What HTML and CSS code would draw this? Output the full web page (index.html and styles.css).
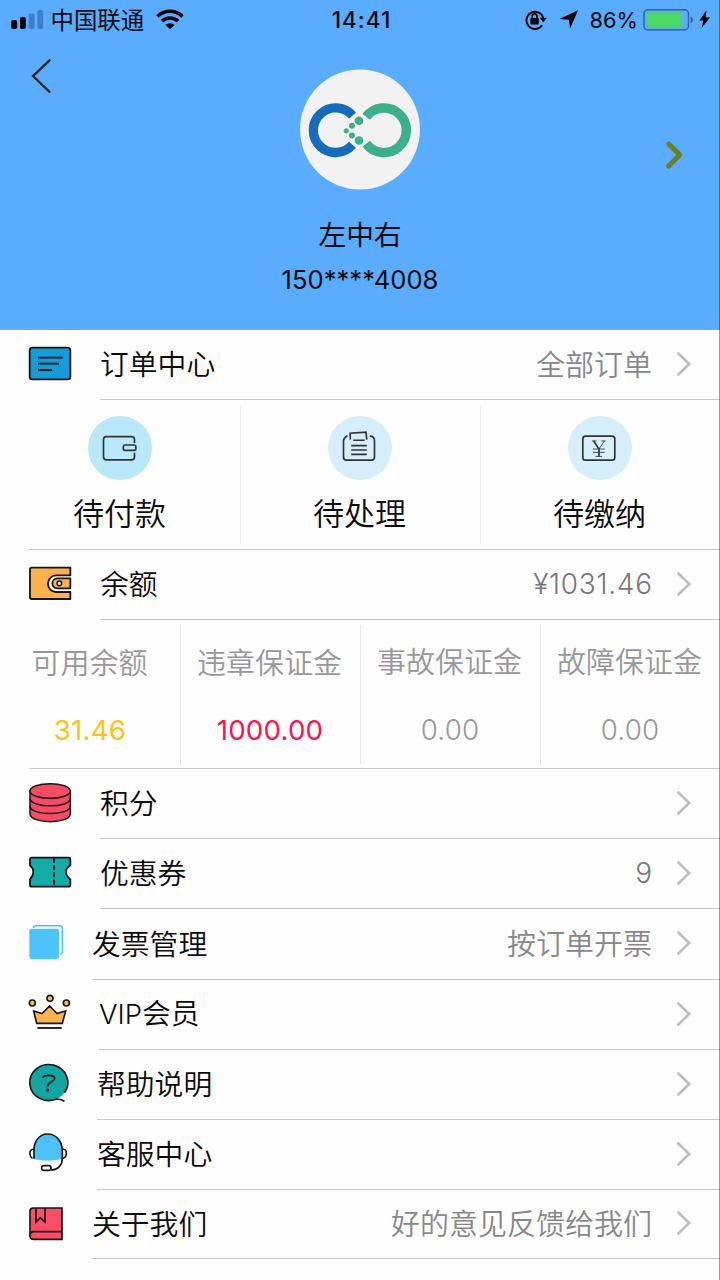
FILE: index.html
```html
<!DOCTYPE html>
<html lang="zh-CN">
<head>
<meta charset="utf-8">
<title>个人中心</title>
<link rel="stylesheet" href="styles.css">
</head>
<body>
<svg class="defs" width="0" height="0"><defs>
  <symbol id="chevron" viewBox="0 0 16 26"><path d="M1.6 1.8 13.2 13 1.6 24.2" fill="none" stroke="#bdbdc2" stroke-width="2.6"/></symbol>
</defs></svg>
<main class="screen">
  <header class="hero">
    <div class="status">
      <div class="status-left">
        <svg width="34" height="40" viewBox="0 0 34 40"><rect x="0.3" y="20" width="5.8" height="9" rx="1.8"/><rect x="9" y="17" width="5.8" height="12" rx="1.8"/><g fill="#3f7fc6"><rect x="17.8" y="13.6" width="5.8" height="15.4" rx="1.8"/><rect x="26.4" y="10" width="5.8" height="19" rx="1.8"/></g></svg>
        <span class="carrier">中国联通</span>
        <svg class="wifi" width="28" height="40" viewBox="0 0 28 40"><g fill="none" stroke="#000" stroke-width="3.5"><path d="M1.5 16.4a18 18 0 0 1 25 0"/><path d="M6 21.1a11.7 11.7 0 0 1 16 0"/></g><path d="M9.3 25a7 7 0 0 1 9.4 0L14 29z"/></svg>
      </div>
      <div class="clock">14:41</div>
      <div class="status-right">
        <svg width="22" height="40" viewBox="0 0 22 40"><path d="M17.1 25.3A8.6 8.6 0 1 1 18.3 18" fill="none" stroke="#000" stroke-width="1.9"/><path d="M14.8 17.7h7l-3.6 4.8z"/><rect x="5.4" y="18" width="8.4" height="6.5" rx="1"/><path d="M7.2 18.5v-2.2a2.4 2.4 0 0 1 4.800 0v2.2" fill="none" stroke="#000" stroke-width="1.6"/></svg>
        <svg class="locate" width="20" height="40" viewBox="0 0 20 40"><path d="M19 10.3 11 28.7 10 19.8 .5 19z"/></svg>
        <span class="percent">86%</span>
        <svg class="battery" width="51" height="40" viewBox="0 0 51 40"><rect x="1" y="9.8" width="44.5" height="20.2" rx="4" fill="none" stroke="#34649a" stroke-width="1.5"/><rect x="3.8" y="12.3" width="35" height="15" fill="#4cd964"/><path d="M47.6 16.4q2.6 1 2.6 3.4t-2.6 3.4z" fill="#34649a"/></svg>
        <svg class="bolt" width="12" height="40" viewBox="0 0 12 40"><path d="M7.5 10 .4 20.5h4L2.5 28.2 11 17.6H6.6z"/></svg>
      </div>
    </div>
    <svg class="back" width="22" height="36" viewBox="0 0 22 36"><path d="M18.5 2.3 2 18.1 18.5 33.8" fill="none" stroke="#33251a" stroke-width="2.3" stroke-linecap="round"/></svg>
    <div class="profile">
      <svg class="avatar" width="120" height="121" viewBox="0 -.5 120 121"><circle cx="60" cy="60" r="60" fill="#f2f2f2"/><path d="M52.5 46.1A22.3 22.3 0 1 0 52.5 75.3" fill="none" stroke="#146cba" stroke-width="9.3"/><path d="M66.2 47.3A22.3 22.3 0 1 1 66.2 74.1" fill="none" stroke="#3caf8d" stroke-width="9.5"/><g fill="#3caf8d"><circle cx="59" cy="51.3" r="4.3"/><circle cx="52" cy="56.3" r="3"/><circle cx="46.3" cy="61.3" r="2.6"/><circle cx="52" cy="66" r="3"/><circle cx="59" cy="71" r="4.3"/></g></svg>
      <div class="name">左中右</div>
      <div class="phone">150****4008</div>
    </div>
    <svg class="hero-next" width="20" height="32" viewBox="0 0 20 32"><path d="M4.6 4.8 15.8 16 4.6 27" fill="none" stroke="#69841f" stroke-width="5" stroke-linecap="round" stroke-linejoin="round"/></svg>
  </header>

  <section class="row">
    <svg class="icon" viewBox="84 0 132 207"><rect x="89" y="53" width="122" height="95" rx="8" fill="#149bd8" stroke="#151515" stroke-width="5.500"/><path d="M114 83h74M114 101h63M114 120h42" stroke="#111" stroke-width="5.500"/></svg>
    <div class="row-body"><span class="label">订单中心</span><span class="value">全部订单</span><svg class="chevron"><use href="#chevron"/></svg></div>
  </section>

  <section class="orders">
    <div class="order">
      <svg class="disc" viewBox="265 259 190 190"><circle cx="360" cy="354" r="95" fill="#b9e8fb"/><g fill="none" stroke="#333" stroke-width="5"><path d="M403 339v-10q0-9-9-9h-74q-9 0-9 9v51q0 9 9 9h74q9 0 9-9v-12"/><rect x="370" y="345" width="37" height="16" rx="5"/></g></svg>
      <span>待付款</span>
    </div>
    <div class="order">
      <svg class="disc" viewBox="265 49 190 190"><circle cx="360" cy="144" r="95" fill="#d6effc"/><g fill="none" stroke="#333" stroke-width="5"><path d="M323 109h-3q-9 6-9 14v48q0 9 9 9h74q9 0 9-9v-48q0-14-14-14M331 119v-19l47-3 2 22M340 121h34M334 137h46M334 150h46M334 163h46"/></g></svg>
      <span>待处理</span>
    </div>
    <div class="order">
      <svg class="disc" viewBox="265 259 190 190"><circle cx="360" cy="354" r="95" fill="#d6effc"/><rect x="309" y="319" width="95" height="71" rx="8" fill="none" stroke="#333" stroke-width="5"/><g fill="none" stroke="#333"><path d="M341 333 357 357V379" stroke-width="5"/><path d="M373 333 357 357M336 333h14M364 333h13M339 357h35M339 367h35M347 379h19" stroke-width="2.500"/></g></svg>
      <span>待缴纳</span>
    </div>
  </section>

  <section class="row">
    <svg class="icon" viewBox="84 0 132 207"><g stroke="#17151c" stroke-width="5.500" stroke-linejoin="round"><path d="M95 53H211V76H168a24 25 0 0 0 0 50H211V147H95q-5 0-5-5V58q0-5 5-5z" fill="#fcb24c"/><path d="M211 85H172a15 15 0 0 0 0 30H211z" fill="#fcb24c"/><circle cx="178" cy="100" r="7" fill="#fff" stroke-width="4.500"/></g></svg>
    <div class="row-body"><span class="label">余额</span><span class="value num">¥1031.46</span><svg class="chevron"><use href="#chevron"/></svg></div>
  </section>

  <section class="funds">
    <div class="fund"><span class="fund-name">可用余额</span><span class="amount gold">31.46</span></div>
    <div class="fund"><span class="fund-name">违章保证金</span><span class="amount red">1000.00</span></div>
    <div class="fund raised"><span class="fund-name">事故保证金</span><span class="amount">0.00</span></div>
    <div class="fund raised"><span class="fund-name">故障保证金</span><span class="amount">0.00</span></div>
  </section>

  <section class="row">
    <svg class="icon" viewBox="84 -3 132 207"><g fill="#f24c67" stroke="#201318" stroke-width="4.500"><path d="M90 63v68c0 32 121 32 121 0V63z"/><ellipse cx="150.500" cy="63" rx="60.500" ry="22"/><path d="M90 85c0 30 121 30 121 0M90 108c0 30 121 30 121 0" fill="none"/></g></svg>
    <div class="row-body"><span class="label">积分</span><svg class="chevron"><use href="#chevron"/></svg></div>
  </section>
  <section class="row">
    <svg class="icon" viewBox="84 207 132 207"><path d="M95 263H206q5 0 5 6v17q-13 9-13 20t13 22v16q0 6-6 6H96q-6 0-6-6v-16q10-11 10-22t-10-20v-17q0-6 5-6z" fill="#15aba9" stroke="#171717" stroke-width="5.500"/><path d="M162 263v88" stroke="#111" stroke-width="5.500" stroke-dasharray="15 7"/></svg>
    <div class="row-body"><span class="label">优惠券</span><span class="value num">9</span><svg class="chevron"><use href="#chevron"/></svg></div>
  </section>
  <section class="row invoice">
    <svg class="icon" viewBox="84 417 132 207"><rect x="88" y="476" width="89" height="91" rx="8" fill="#4dc2f7"/><path d="M101 474v-2q0-5 6-5h73q7 0 7 7v71q0 7-6 7" fill="none" stroke="#4dc2f7" stroke-width="4.500"/></svg>
    <div class="row-body"><span class="label">发票管理</span><span class="value">按订单开票</span><svg class="chevron"><use href="#chevron"/></svg></div>
  </section>
  <section class="row vip">
    <svg class="icon" viewBox="84 1 132 207"><g fill="#fdb44b" stroke="#171717" stroke-width="5"><path d="M101 94 126 102 149 79 171 102 197 94 187 131H110z"/><g fill="#ffc83a"><circle cx="97" cy="70" r="9"/><circle cx="150" cy="56" r="9"/><circle cx="199" cy="70" r="9"/></g><path d="M112 145h73" stroke-width="5.500"/></g></svg>
    <div class="row-body"><span class="label"><span class="latin">VIP</span>会员</span><svg class="chevron"><use href="#chevron"/></svg></div>
  </section>
  <section class="row support">
    <svg class="icon" viewBox="84 210 132 207"><ellipse cx="146" cy="308" rx="57" ry="54" fill="#14a5a3"/><path d="M172 361 193 342 203 356z" fill="#fefefe"/><g fill="none" stroke="#171717" stroke-width="5"><path d="M193.500 338A57 54 0 1 0 169.500 357q12 0 24 7"/><path d="M128 294q2-8 18-8 18 0 18 10c0 9-22 10-22 24"/></g><circle cx="143" cy="330" r="4.500"/></svg>
    <div class="row-body"><span class="label">帮助说明</span><svg class="chevron"><use href="#chevron"/></svg></div>
  </section>
  <section class="row support">
    <svg class="icon" viewBox="84 420 132 207"><path d="M103 538c-7-35 5-76 41-76s50 37 41 76q-41 8-82 0z" fill="#4dc2f7"/><g fill="none" stroke="#171717" stroke-width="5"><path d="M102 536v-20c-2-29 14-54 41-54s45 24 44 54v20"/><path d="M103 507c-10 0-14 5-13 15 1 8 3 12 8 12M187 507c9 0 13 5 12 14-1 9-4 14-12 14 0 20-12 35-34 35"/><rect x="125" y="557" width="28" height="14" rx="6"/></g></svg>
    <div class="row-body"><span class="label">客服中心</span><svg class="chevron"><use href="#chevron"/></svg></div>
  </section>
  <section class="row about">
    <svg class="icon" viewBox="84 630 132 207"><g fill="#fb4c68" stroke="#171717" stroke-width="5"><path d="M99 684H186V778H101q-11 0-11-10V694q0-10 9-10z"/><path d="M186 755H102q-12 0-12 12" fill="none"/><path d="M108 684v42l13-13 14 13V684" fill="none"/></g></svg>
    <div class="row-body"><span class="label">关于我们</span><span class="value">好的意见反馈给我们</span><svg class="chevron"><use href="#chevron"/></svg></div>
  </section>
</main>
</body>
</html>
```
FILE: styles.css
```css
* { box-sizing: border-box; }
body {
  margin: 0;
  background: #fefefe;
  color: #0a0a0a;
  font-family: "Noto Sans CJK SC", sans-serif;
  font-weight: 350;
}
svg { display: block; flex: none; }
.defs { position: absolute; }
.screen {
  position: relative;
  width: 720px;
  height: 1280px;
  overflow: hidden;
}
.screen::after {
  content: "";
  position: absolute;
  top: 0;
  right: 0;
  width: 1px;
  height: 100%;
  background: rgba(20, 20, 30, .42);
}
.hero { position: relative; height: 330px; background: #5aacff; }
.status {
  display: grid;
  grid-template-columns: 1fr auto 1fr;
  height: 40px;
  padding: 0 9px 0 11px;
}
.status-left, .status-right { display: flex; align-items: center; height: 40px; }
.status-right { justify-content: flex-end; }
.carrier { margin-left: 5.500px; padding-bottom: 2px; font-size: 23.400px; line-height: 38px; font-weight: 400; }
.wifi { margin-left: 12px; }
.clock, .percent { font-family: Inter, sans-serif; line-height: 40px; }
.clock { padding-left: 1px; font-size: 22.500px; font-weight: 500; letter-spacing: 1px; }
.locate { margin-left: 12px; }
.percent { margin-left: 11px; font-size: 21.800px; font-weight: 400; }
.battery { margin-left: 5px; }
.bolt { margin-left: 5px; }
.back { position: absolute; left: 31px; top: 58px; }
.hero-next { position: absolute; left: 664px; top: 139px; }
.profile { display: flex; flex-direction: column; align-items: center; padding-top: 29px; }
.name { margin-top: 23px; font-size: 27.700px; line-height: 40px; font-weight: 400; }
.phone { margin-top: 7px; font-family: Inter, sans-serif; font-size: 25.600px; line-height: 40px; font-weight: 400; }

.row { display: flex; height: 70px; padding-left: 28px; }
.icon { width: 44px; height: 69px; margin-right: 28px; }
.row-body {
  flex: 1;
  display: flex;
  align-items: center;
  padding: 0 28px 2px 0;
  border-bottom: 1px solid #c9c9cb;
}
.label { flex: 1; padding-bottom: 1px; font-size: 28.800px; line-height: 44px; }
.value { padding-bottom: 2px; font-size: 29px; line-height: 44px; color: #88888b; }
.num, .amount, .latin { font-family: Inter, sans-serif; }
.num { padding-bottom: 0; font-size: 28px; letter-spacing: .7px; margin-right: -.7px; color: #77777b; font-weight: 350; }
.latin { font-size: 27.500px; font-weight: 300; }
.chevron { width: 16px; height: 26px; margin-left: 24px; }

.orders {
  display: grid;
  grid-template-columns: repeat(3, 240px);
  height: 150px;
  position: relative;
}
.order { display: flex; flex-direction: column; align-items: center; padding-top: 16px; font-size: 31px; line-height: 44px; }
.order span { margin: 10px 1px 0 0; }
.order + .order { background: linear-gradient(#f2f2f3, #f2f2f3) 0 6px / 1px 138px no-repeat; }
.disc { width: 64px; height: 64px; }
.orders::after, .funds::after {
  content: "";
  position: absolute;
  left: 29px;
  right: 0;
  bottom: 0;
  height: 1px;
  background: #c9c9cb;
}
.funds {
  display: grid;
  grid-template-columns: repeat(4, 180px);
  height: 149px;
  position: relative;
}
.fund { display: flex; flex-direction: column; align-items: center; padding-top: 19px; color: #98989b; }
.fund + .fund { background: linear-gradient(#e9e9eb, #e9e9eb) 0 5px / 1px 139px no-repeat; }
.fund-name { margin-right: 1px; font-size: 29px; line-height: 44px; }
.amount { margin-top: 25px; font-size: 27.700px; line-height: 44px; letter-spacing: .2px; }
.raised { padding-top: 18px; }
.raised .amount { margin-top: 26px; }
.gold { color: #fcc314; font-weight: 400; }
.red { color: #fb1352; font-weight: 400; }

.invoice { height: 71px; }
.invoice .icon { margin-right: 20px; }
.vip .icon { margin-right: 27px; }
.support .icon { margin-right: 25px; }
.about { height: 69px; }
.about .icon { margin-right: 20px; }
```
